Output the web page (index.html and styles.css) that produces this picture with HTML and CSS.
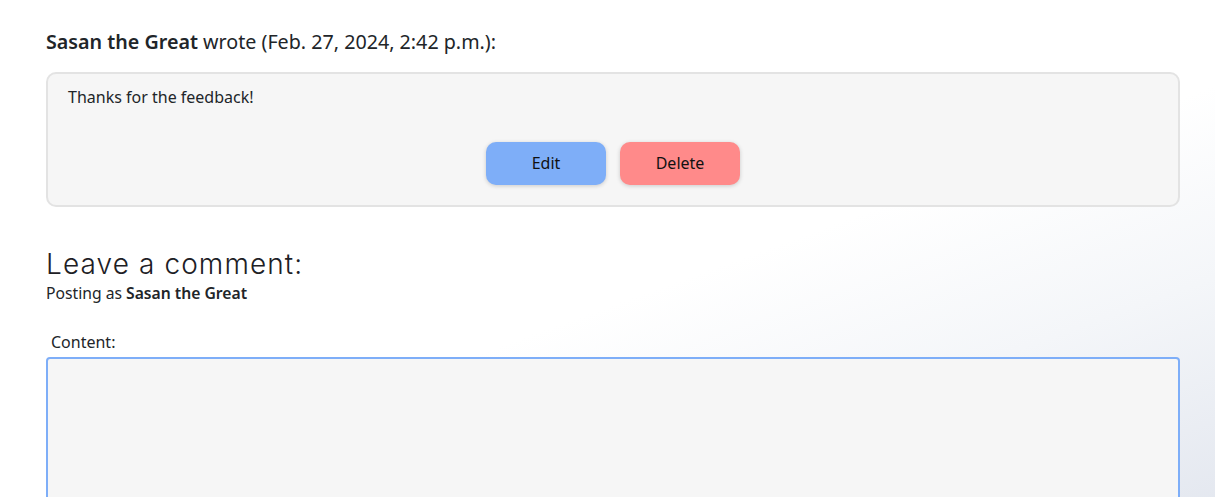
FILE: index.html
```html
<!DOCTYPE html>
<html lang="en">
<head>
<meta charset="utf-8">
<title>Comments</title>
<link rel="stylesheet" href="styles.css">
</head>
<body>
<main class="page">
  <section class="comment">
    <p class="comment-meta"><strong>Sasan the Great</strong> wrote (Feb. 27, 2024, 2:42 p.m.):</p>
    <div class="comment-box">
      <p class="comment-text">Thanks for the feedback!</p>
      <div class="comment-actions">
        <button class="btn btn-edit">Edit</button>
        <button class="btn btn-delete">Delete</button>
      </div>
    </div>
  </section>
  <section class="new-comment">
    <h2 class="new-title">Leave a comment:</h2>
    <p class="posting-as">Posting as <strong>Sasan the Great</strong></p>
    <form class="comment-form">
      <label class="field-label" for="content">Content:</label>
      <textarea id="content" class="field-input"></textarea>
    </form>
  </section>
</main>
</body>
</html>
```
FILE: styles.css
```css
html, body {
  margin: 0;
  padding: 0;
}
body {
  min-height: 497px;
  font-family: "Noto Sans", "Open Sans", sans-serif;
  color: #212529;
  background: linear-gradient(160deg, #ffffff 0%, #ffffff 55%, #f4f6f9 75%, #e3e7ef 100%);
  overflow: hidden;
}
.page {
  padding: 0 35px 0 46px;
}
.comment-meta {
  margin: 0;
  padding-top: 28px;
  font-size: 19.7px;
  line-height: 27px;
}
.comment-meta strong {
  font-weight: 600;
}
.comment-box {
  margin-top: 17px;
  background: #f6f6f6;
  border: 2px solid #e3e3e3;
  border-radius: 10px;
  padding: 12px 20px 20px;
  box-sizing: border-box;
}
.comment-text {
  margin: 0;
  font-size: 16px;
  line-height: 22px;
}
.comment-actions {
  display: flex;
  justify-content: center;
  gap: 14px;
  margin-top: 34px;
}
.btn {
  width: 120px;
  height: 43px;
  border: none;
  border-radius: 10px;
  font-family: "Noto Sans", "Open Sans", sans-serif;
  font-size: 16px;
  line-height: 22px;
  padding: 0 0 2px;
  color: #111;
  box-shadow: 0 1px 4px rgba(0, 0, 0, 0.18);
  cursor: pointer;
}
.btn-edit {
  background: #7eaef8;
}
.btn-delete {
  background: #ff8a8a;
}
.new-comment {
  margin-top: 40px;
}
.new-title {
  margin: 0;
  font-family: "Inter", "Lato", sans-serif;
  font-weight: 300;
  font-size: 28px;
  line-height: 34px;
  color: #1d2025;
  letter-spacing: 1.1px;
}
.posting-as {
  margin: 0;
  padding-top: 1px;
  font-size: 15.7px;
  line-height: 22px;
}
.posting-as strong {
  font-weight: 600;
}
.comment-form {
  margin-top: 27px;
}
.field-label {
  display: block;
  padding-left: 5px;
  font-size: 16px;
  line-height: 22px;
}
.field-input {
  display: block;
  margin-top: 4px;
  width: 100%;
  height: 160px;
  box-sizing: border-box;
  background: #f6f6f6;
  border: 2px solid #7eaef8;
  border-radius: 4px;
  resize: none;
  outline: none;
}
```
